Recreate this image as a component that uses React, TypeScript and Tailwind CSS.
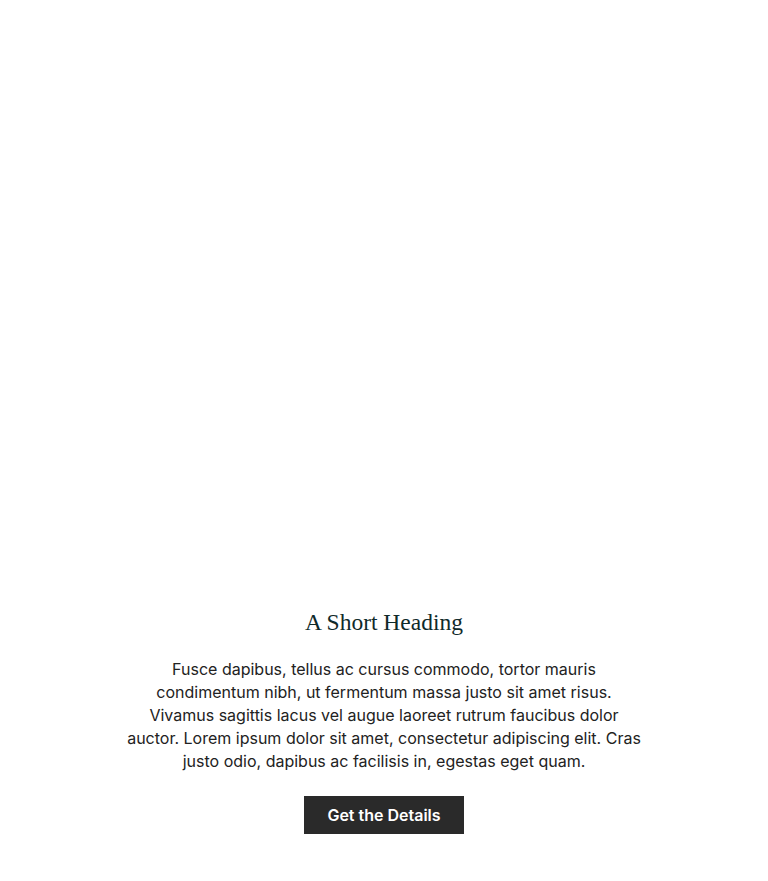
import React from "react";

const App: React.FC = () => {
  return (
    <div className="min-h-[881px] w-full bg-white">
      {/* empty hero area above the text block */}
      <div className="h-[607px]" />
      <section className="mx-auto flex max-w-[540px] flex-col items-center px-2 text-center">
        <h2 className="text-[23.5px] leading-[30px] font-normal text-[#0f2a2a] [font-family:'Liberation_Serif',serif]">
          A Short Heading
        </h2>
        <p className="mt-[21px] text-[16px] leading-[23px] text-[#222222] [font-family:Inter,sans-serif]">
          Fusce dapibus, tellus ac cursus commodo, tortor mauris condimentum
          nibh, ut fermentum massa justo sit amet risus. Vivamus sagittis
          lacus vel augue laoreet rutrum faucibus dolor auctor. Lorem ipsum
          dolor sit amet, consectetur adipiscing elit. Cras justo odio,
          dapibus ac facilisis in, egestas eget quam.
        </p>
        <button className="mt-[23px] h-[38px] w-[160px] bg-[#2a2a2a] text-[16px] font-semibold text-white [font-family:Inter,sans-serif]">
          Get the Details
        </button>
      </section>
    </div>
  );
};

export default App;
